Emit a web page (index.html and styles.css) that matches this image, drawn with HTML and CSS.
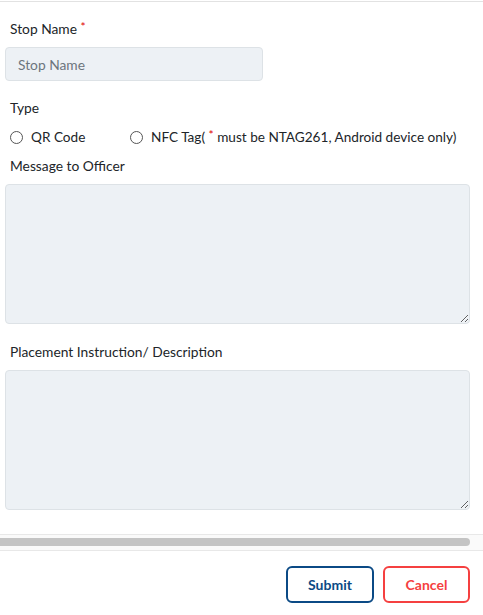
FILE: index.html
```html
<!DOCTYPE html>
<html>
<head>
<meta charset="utf-8">
<link rel="stylesheet" href="styles.css">
</head>
<body>
<div class="modal">
  <div class="body">
    <div class="field">
      <label class="label">Stop Name <span class="req">*</span></label>
      <input class="input" type="text" placeholder="Stop Name">
    </div>
    <div class="field type">
      <label class="label">Type</label>
      <div class="radios">
        <label class="radio"><span class="circle"></span>QR Code</label>
        <label class="radio"><span class="circle"></span><span>NFC Tag( <span class="req">*</span> must be NTAG261, Android device only)</span></label>
      </div>
    </div>
    <div class="field">
      <label class="label">Message to Officer</label>
      <textarea class="area"></textarea>
    </div>
    <div class="field">
      <label class="label">Placement Instruction/ Description</label>
      <textarea class="area"></textarea>
    </div>
  </div>
  <div class="hscroll"><div class="thumb"></div></div>
  <div class="footer">
    <button class="btn submit">Submit</button>
    <button class="btn cancel">Cancel</button>
  </div>
</div>
</body>
</html>
```
FILE: styles.css
```css
* { box-sizing: border-box; }
html, body { margin: 0; padding: 0; background: #fff; }
body { font-family: Lato, "Noto Sans", sans-serif; color: #212529; font-size: 14px; }
.modal { width: 483px; border-top: 1px solid #e2e2e2; margin-top: 1px; }
.body { padding: 18px 13px 24px 5px; }
.field { display: flex; flex-direction: column; }
.label { display: block; padding-left: 5px; font-size: 13.8px; line-height: 18px; margin-bottom: 9px; }
.req { color: #e00000; font-size: 12px; vertical-align: top; line-height: 14px; }
.input {
  width: 258px; height: 34px; border: 1px solid #dde2e6; border-radius: 4px;
  background: #edf1f5; padding: 0 12px; font-family: Lato, sans-serif; font-size: 13.8px; color: #212529;
  margin-bottom: 18px; outline: none;
}
.input::placeholder { color: #6c757d; }
.type .label { margin-bottom: 11px; }
.radios { display: flex; padding-left: 5px; margin-bottom: 11px; }
.radio { display: flex; align-items: center; font-size: 13.6px; line-height: 18px; }
.radio:first-child { width: 120px; }
.circle { width: 13px; height: 13px; border: 1px solid #555; border-radius: 50%; margin-right: 8px; flex: none; }
.area {
  width: 465px; height: 140px; border: 1px solid #dde2e6; border-radius: 4px;
  background: #edf1f5; resize: vertical; margin: 0 0 19px 0; display: block;
}
.field:last-child .area { margin-bottom: 0; }
.hscroll {
  height: 17px; border-top: 1px solid #e8e8e8; border-bottom: 1px solid #e8e8e8; background: #fafafa;
  padding: 3px 13px 0 0;
}
.thumb { height: 8px; background: #c4c4c4; border-radius: 0 4px 4px 0; }
.footer { display: flex; justify-content: flex-end; gap: 9px; padding: 15px 13px 0 0; }
.btn {
  height: 37px; border-radius: 6px; background: #fff; font-family: Lato, sans-serif; font-size: 14px; font-weight: 700;
  border: 2px solid; padding: 0;
}
.submit { width: 88px; color: #0b4a85; border-color: #0b4a85; }
.cancel { width: 87px; color: #f54040; border-color: #f54040; }
```
